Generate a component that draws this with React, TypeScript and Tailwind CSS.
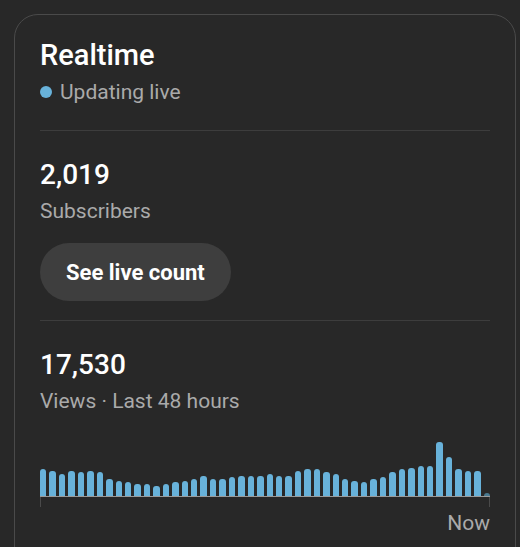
const views = [
  27, 25, 22, 25, 24, 25, 24, 17, 15, 14, 12, 12, 10, 12, 14, 15, 17, 20, 17, 17, 19, 20, 20, 20,
  22, 20, 20, 25, 27, 27, 24, 22, 17, 15, 14, 17, 19, 24, 27, 28, 30, 30, 54, 39, 27, 25, 25, 3,
];

const Divider = () => <div className="h-px bg-[#3d3d3d]" />;

export default function App() {
  return (
    <div className="min-h-[547px] overflow-hidden bg-[#282828] pt-[14px] pl-[14px] font-['Roboto','Liberation_Sans',sans-serif]">
      <div className="h-[580px] w-[502px] rounded-[24px] border border-[#4a4a4a] px-[25px] pt-6">
        <h2 className="text-[29px] leading-[32px] font-medium text-white">Realtime</h2>
        <div className="mt-[7px] flex items-center gap-2 text-[21px] leading-[28px] text-[#aaaaaa]">
          <span className="h-3 w-3 rounded-full bg-[#68b2da]" />
          <span>Updating live</span>
        </div>

        <div className="mt-6">
          <Divider />
        </div>

        <div className="mt-[28px] text-[28px] leading-[32px] font-medium text-white">2,019</div>
        <div className="mt-[6px] text-[21px] leading-[28px] text-[#aaaaaa]">Subscribers</div>
        <button className="mt-[18px] h-[58px] rounded-full bg-[#3e3e3e] px-[26px] text-[22px] font-bold text-white">
          See live count
        </button>

        <div className="mt-[19px]">
          <Divider />
        </div>

        <div className="mt-[28px] text-[28px] leading-[32px] font-medium text-white">17,530</div>
        <div className="mt-[6px] text-[21px] leading-[28px] text-[#aaaaaa]">Views · Last 48 hours</div>

        <div className="mt-[21px]">
          <div className="flex h-[60px] items-end gap-[3px]">
            {views.map((v, i) => (
              <div
                key={i}
                className={`flex-1 rounded-t-[3px] ${i === views.length - 1 ? 'bg-[#4a7a91]' : 'bg-[#68b2da]'}`}
                style={{ height: v }}
              />
            ))}
          </div>
          <div className="h-px bg-[#9a9a9a]" />
          <div className="flex h-[10px] justify-between">
            <div className="w-px bg-[#4a4a4a]" />
            <div className="w-px bg-[#4a4a4a]" />
          </div>
          <div className="mt-[2px] text-right text-[21px] leading-[28px] text-[#aaaaaa]">Now</div>
        </div>
      </div>
    </div>
  );
}
